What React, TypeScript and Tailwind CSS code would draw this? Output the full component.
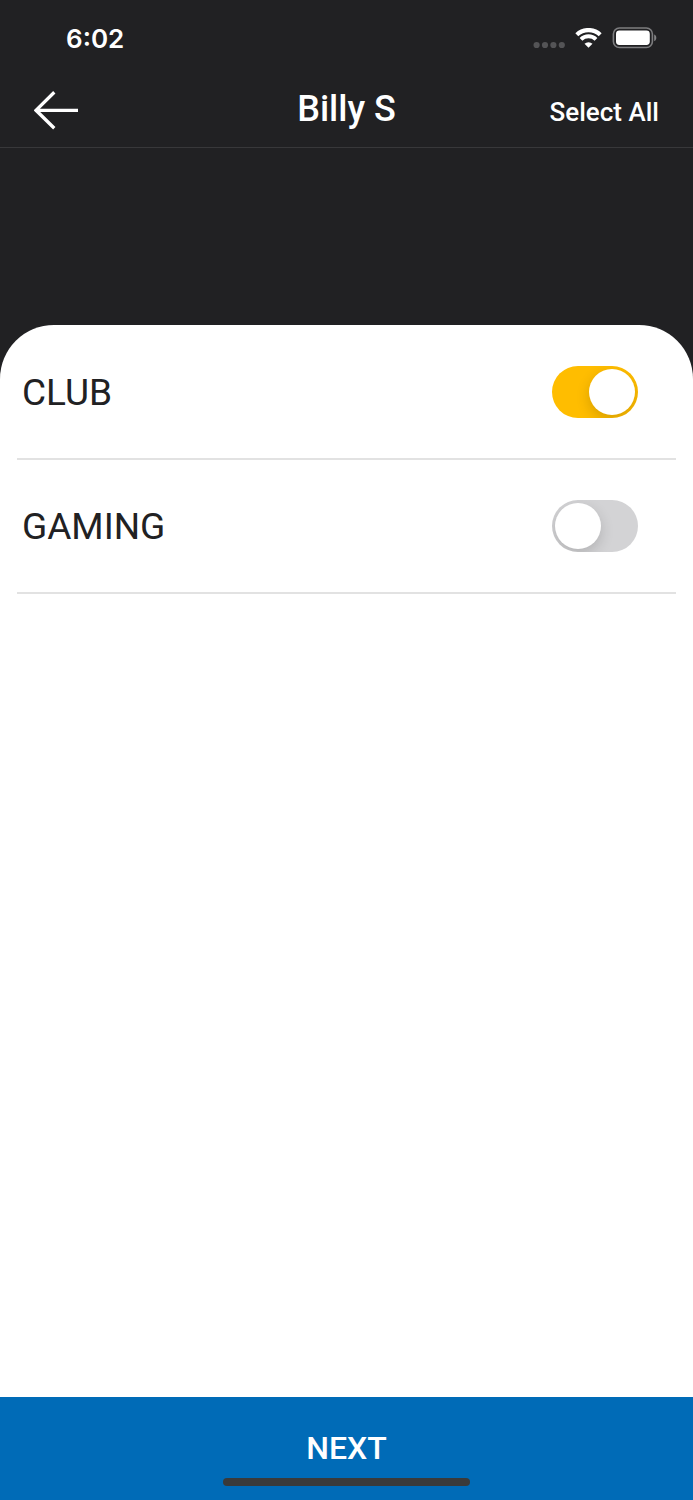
import { useState } from 'react';

const initialCategories = [
  { id: 'club', name: 'CLUB', enabled: true },
  { id: 'gaming', name: 'GAMING', enabled: false }
];

function StatusBar() {
  return (
    <div className="flex h-[76px] items-center justify-between pl-[66px] pr-9">
      <span className="pt-0.5 font-[Inter,sans-serif] text-[26px] font-semibold leading-8 text-white">
        6:02
      </span>
      <div className="flex items-center gap-[10px]">
        <svg className="mt-[14px] h-2 w-8" viewBox="0 0 32 8" fill="#545456" aria-hidden="true">
          <circle cx="3.6" cy="4" r="3.1" />
          <circle cx="12" cy="4" r="3.1" />
          <circle cx="20.4" cy="4" r="3.1" />
          <circle cx="28.8" cy="4" r="3.1" />
        </svg>
        <svg className="h-5 w-[27px]" viewBox="0 0 27 20" aria-hidden="true">
          <path
            d="M1.8 6.7 A17 17 0 0 1 25.2 6.7"
            fill="none"
            stroke="#fff"
            strokeWidth="4.2" />
          <path
            d="M6 11.4 A10.8 10.8 0 0 1 21 11.4"
            fill="none"
            stroke="#fff"
            strokeWidth="4" />
          <path
            d="M13.5 19.8 L9.5 15.8 A5.7 5.7 0 0 1 17.5 15.8 Z"
            fill="#fff" />
        </svg>
        <svg className="h-[22px] w-[45px]" viewBox="0 0 45 22" aria-hidden="true">
          <rect x="1.4" y="1" width="39" height="19.5" rx="6" fill="none" stroke="#7d7d7f" strokeWidth="1.6" />
          <rect x="4" y="3.6" width="33.8" height="14.3" rx="3.4" fill="#fff" />
          <path d="M42.2 7.4 C45 8.4 45 13.1 42.2 14.1 Z" fill="#838385" />
        </svg>
      </div>
    </div>
  );
}

function Header({ onSelectAll }: { onSelectAll: () => void }) {
  return (
    <header className="grid h-[72px] grid-cols-[1fr_auto_1fr] items-center border-b border-[#38383a] px-[34px]">
      <button type="button" aria-label="Back" className="mb-1 justify-self-start">
        <svg className="h-10 w-[45px]" viewBox="0 0 45 40" fill="none" stroke="#fff" strokeWidth="3.3" aria-hidden="true">
          <path d="M20.3 2.3 L2 20.3 L20.3 38.3 M2 20.3 H44" />
        </svg>
      </button>
      <h1 className="mb-1.5 text-[36px] font-medium leading-10 text-white">Billy S</h1>
      <button
        type="button"
        onClick={onSelectAll}
        className="justify-self-end text-[26px] font-medium leading-8 text-white">
        Select All
      </button>
    </header>
  );
}

type SwitchRowProps = {
  id: string;
  name: string;
  enabled: boolean;
  onToggle: () => void;
};

function SwitchRow({ id, name, enabled, onToggle }: SwitchRowProps) {
  return (
    <li className="flex h-[134px] items-center justify-between border-b-2 border-[#e2e2e2] pl-[5px] pr-[38px]">
      <label
        htmlFor={id}
        className="pt-0.5 text-[37px] font-normal leading-10 text-[#212123]">
        {name}
      </label>
      <input
        id={id}
        type="checkbox"
        role="switch"
        checked={enabled}
        onChange={onToggle}
        className="flex h-[52px] w-[86px] cursor-pointer appearance-none items-center overflow-hidden rounded-full bg-[#d3d3d5] px-[3px] before:size-[46px] before:rounded-full before:bg-white before:shadow-[0_5px_14px_rgba(0,0,0,0.16)] before:content-[''] checked:justify-end checked:bg-[#ffbd00]" />
    </li>
  );
}

export default function App() {
  const [categories, setCategories] = useState(initialCategories);

  const toggle = (id: string) =>
    setCategories((list) =>
      list.map((c) => (c.id === id ? { ...c, enabled: !c.enabled } : c))
    );

  const selectAll = () =>
    setCategories((list) => list.map((c) => ({ ...c, enabled: true })));

  return (
    <div className="flex min-h-screen flex-col bg-[#212123] font-[Roboto,sans-serif]">
      <StatusBar />
      <Header onSelectAll={selectAll} />
      <main className="mt-[177px] flex-1 rounded-t-[54px] bg-white px-[17px] pt-px">
        <ul>
          {categories.map((c) => (
            <SwitchRow
              key={c.id}
              id={c.id}
              name={c.name}
              enabled={c.enabled}
              onToggle={() => toggle(c.id)} />
          ))}
        </ul>
      </main>
      <footer className="bg-[#006bb7]">
        <button
          type="button"
          className="flex w-full flex-col items-center pb-[14px] pt-[31px] text-[32px] font-medium leading-10 text-white">
          NEXT
          <span className="mt-[10px] h-2 w-[247px] rounded-full bg-[#3a3a3a]" />
        </button>
      </footer>
    </div>
  );
}
